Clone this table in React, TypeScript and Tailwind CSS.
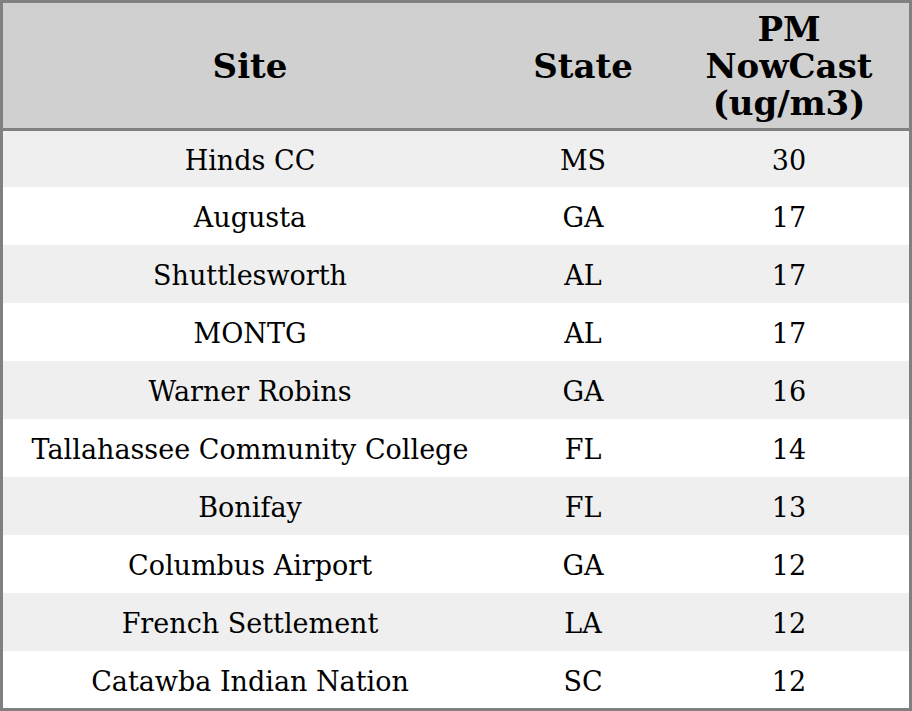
const rows: [string, string, string][] = [
  ["Hinds CC", "MS", "30"],
  ["Augusta", "GA", "17"],
  ["Shuttlesworth", "AL", "17"],
  ["MONTG", "AL", "17"],
  ["Warner Robins", "GA", "16"],
  ["Tallahassee Community College", "FL", "14"],
  ["Bonifay", "FL", "13"],
  ["Columbus Airport", "GA", "12"],
  ["French Settlement", "LA", "12"],
  ["Catawba Indian Nation", "SC", "12"],
];

export default function App() {
  return (
    <div className="w-[912px] h-[711px] bg-white text-black font-['DejaVu_Serif',serif]">
      <div className="h-full border-[3px] border-[#808080] flex flex-col">
        {/* Header */}
        <div className="grid grid-cols-[494px_172px_240px] h-[128px] shrink-0 bg-[#d0d0d0] border-b-[3px] border-[#808080] text-[34px] font-bold leading-[37px]">
          <div className="flex items-center justify-center text-center pt-[2px]">Site</div>
          <div className="flex items-center justify-center text-center pt-[2px]">State</div>
          <div className="flex items-center justify-center text-center pt-[1px]">
            PM
            <br />
            NowCast
            <br />
            (ug/m3)
          </div>
        </div>

        {/* Rows */}
        {rows.map(([site, state, pm], i) => (
          <div
            key={site}
            className={
              "grid grid-cols-[494px_172px_240px] shrink-0 pt-[4px] text-[27px] leading-[30px] " +
              (i % 2 === 0 ? "bg-[#efefef] " : "bg-white ") +
              (i === 0 ? "h-[56px]" : i === rows.length - 1 ? "h-[57px]" : "h-[58px]")
            }
          >
            <div className="flex items-center justify-center">{site}</div>
            <div className="flex items-center justify-center">{state}</div>
            <div className="flex items-center justify-center">{pm}</div>
          </div>
        ))}
      </div>
    </div>
  );
}
